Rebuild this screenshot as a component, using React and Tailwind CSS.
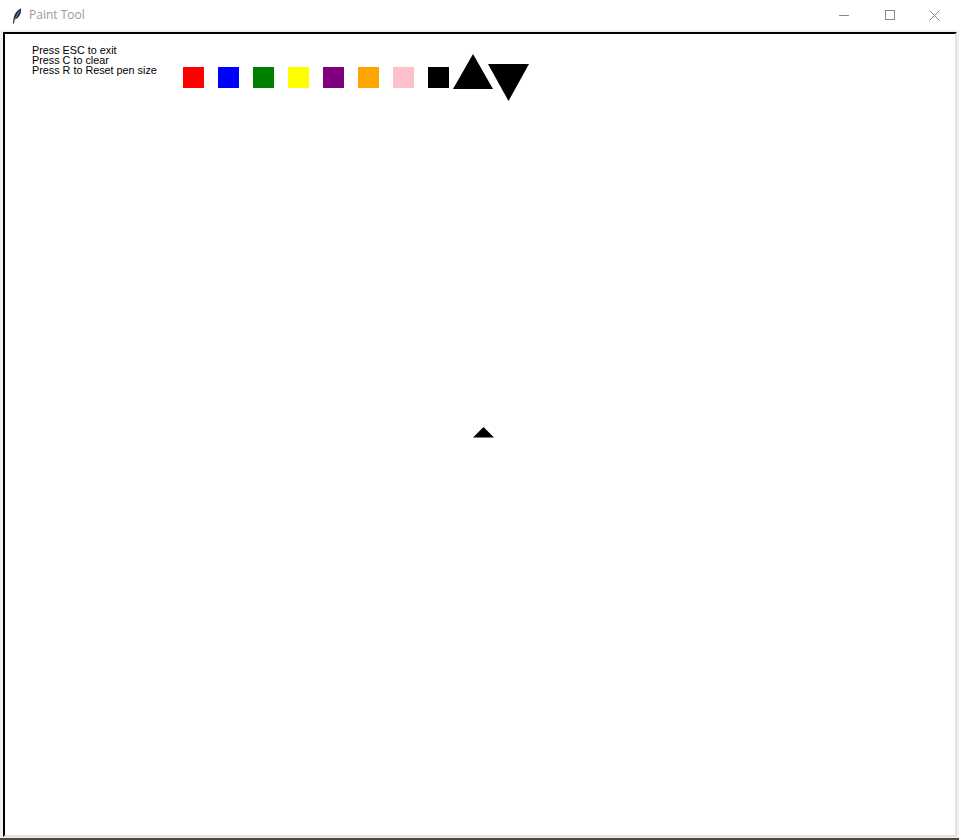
import React from 'react';

const swatches = ['#ff0000', '#0000ff', '#008000', '#ffff00', '#800080', '#ffa500', '#ffc0cb', '#000000'];

// Tk-style feather icon in the title bar
const Feather = () => (
  <svg width="10" height="16" viewBox="0 0 10 16" className="block">
    <path d="M9 0.4 C 5.6 1.4, 2.6 5.2, 1.6 10.2 L 0.9 15.4 L 2 15.4 L 2.7 11.8 C 6.8 9.8, 9.8 5.4, 9 0.4 Z" fill="#1f2a44" />
    <path d="M7.6 2.6 L 2.4 12.2" stroke="#8aa4c8" strokeWidth="0.8" />
  </svg>
);

const TitleBar = () => (
  <div className="h-[30px] bg-white flex items-center">
    <div className="w-[29px] flex justify-center pl-[4px] pt-[1px]">
      <Feather />
    </div>
    <div className="text-[12px] text-[#9a9a9a] pb-[1px]" style={{ fontFamily: '"Open Sans", "Noto Sans", sans-serif' }}>
      Paint Tool
    </div>
    <div className="ml-auto flex items-center h-full">
      <div className="w-[46px] h-full flex items-center justify-center">
        <svg width="10" height="10" viewBox="0 0 10 10"><path d="M0 5.5 H10" stroke="#8a8a8a" strokeWidth="1" /></svg>
      </div>
      <div className="w-[46px] h-full flex items-center justify-center">
        <svg width="10" height="10" viewBox="0 0 10 10"><rect x="0.5" y="0.5" width="9" height="9" fill="none" stroke="#8a8a8a" strokeWidth="1" /></svg>
      </div>
      <div className="w-[46px] h-full flex items-center justify-center pr-[3px]">
        <svg width="11" height="11" viewBox="0 0 11 11"><path d="M0.5 0.5 L10.5 10.5 M10.5 0.5 L0.5 10.5" stroke="#8a8a8a" strokeWidth="1" /></svg>
      </div>
    </div>
  </div>
);

const Canvas = () => (
  <div className="relative w-[954px] h-[805px] bg-white border-t-2 border-l-2 border-t-black border-l-black border-r-2 border-b-2 border-r-[#e3e3e3] border-b-[#e3e3e3]">
    <div className="flex items-start pl-[27px]">
      <div
        className="w-[151px] mt-[11px] text-[10.8px] leading-[10px] text-black"
        style={{ fontFamily: '"Liberation Sans", Arial, sans-serif' }}
      >
        <div>Press ESC to exit</div>
        <div>Press C to clear</div>
        <div>Press R to Reset pen size</div>
      </div>
      <div className="flex gap-[14px] mt-[33px]">
        {swatches.map(c => (
          <div key={c} className="w-[21px] h-[21px]" style={{ backgroundColor: c }} />
        ))}
      </div>
      <svg width="81" height="52" viewBox="0 0 81 52" className="mt-[16px] block">
        <polygon points="4,39 44,39 24,4" fill="#000" />
        <polygon points="39,14 80,14 59.5,51" fill="#000" />
      </svg>
    </div>
    {/* mouse cursor left on the canvas */}
    <svg width="22" height="11" viewBox="0 0 22 11" className="absolute left-[468px] top-[393px]">
      <polygon points="0,10.5 21,10.5 10.5,0" fill="#000" />
    </svg>
  </div>
);

export default function App() {
  return (
    <div className="w-[959px] h-[840px] overflow-hidden bg-[#f0f0f0]">
      <TitleBar />
      <div className="pl-[3px] pt-[2px] pb-[1px]">
        <Canvas />
      </div>
      <div className="h-[2px] bg-[#4b4a3c]" />
    </div>
  );
}
